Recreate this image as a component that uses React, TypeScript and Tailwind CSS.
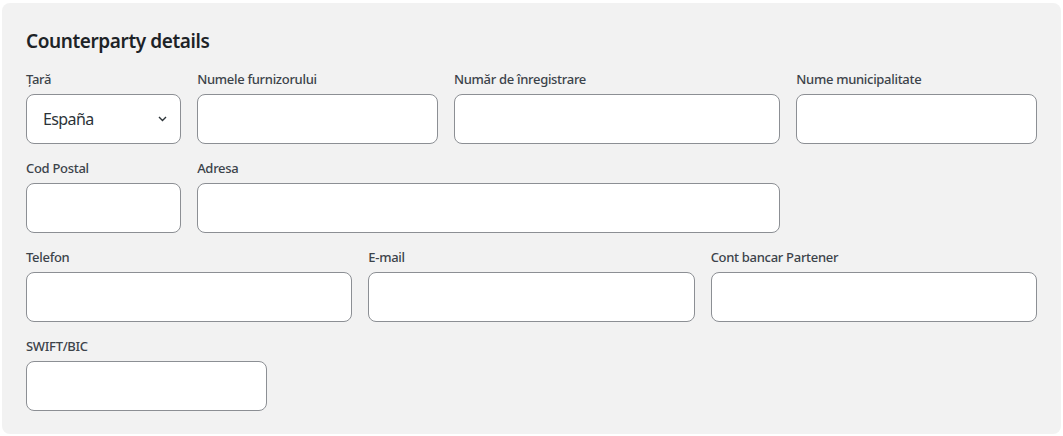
import React from "react";

function Field({ label, span, children }: { label: string; span: string; children?: React.ReactNode }) {
  return (
    <div className={`flex flex-col ${span}`}>
      <label className="text-[13px] leading-[17px] font-medium tracking-[-0.3px] text-[#3c434a] mb-[6px]">{label}</label>
      {children ?? (
        <input className="h-[50px] w-full rounded-[8px] border border-[#8c8f94] bg-white px-4 outline-none" />
      )}
    </div>
  );
}

export default function App() {
  return (
    <div className="bg-white w-[1063px] h-[436px] pl-[2px] pt-[3px]" style={{ fontFamily: '"Noto Sans", "Open Sans", sans-serif' }}>
      <div className="w-[1059px] h-[431px] rounded-[8px] bg-[#f2f2f2] px-6 pt-6">
        <h2 className="text-[19px] leading-[28px] font-semibold tracking-[-0.4px] text-[#1d2327] mb-4">Counterparty details</h2>
        <div className="grid grid-cols-12 gap-x-4 gap-y-4">
          <Field label="Țară" span="col-span-2">
            <div className="relative h-[50px] w-full rounded-[8px] border border-[#8c8f94] bg-white flex items-center pl-4">
              <span className="text-[16px] tracking-[-0.6px] text-[#2c3338]">España</span>
              <svg className="absolute right-[13px] top-[21px]" width="9" height="6" viewBox="0 0 9 6" fill="none">
                <path d="M1 1l3.5 3.5L8 1" stroke="#2c3338" strokeWidth="1.4" />
              </svg>
            </div>
          </Field>
          <Field label="Numele furnizorului" span="col-span-3" />
          <Field label="Număr de înregistrare" span="col-span-4" />
          <Field label="Nume municipalitate" span="col-span-3" />
          <Field label="Cod Postal" span="col-span-2" />
          <Field label="Adresa" span="col-span-7" />
          <div className="col-span-3" />
          <Field label="Telefon" span="col-span-4" />
          <Field label="E-mail" span="col-span-4" />
          <Field label="Cont bancar Partener" span="col-span-4" />
          <Field label="SWIFT/BIC" span="col-span-3" />
        </div>
      </div>
    </div>
  );
}
